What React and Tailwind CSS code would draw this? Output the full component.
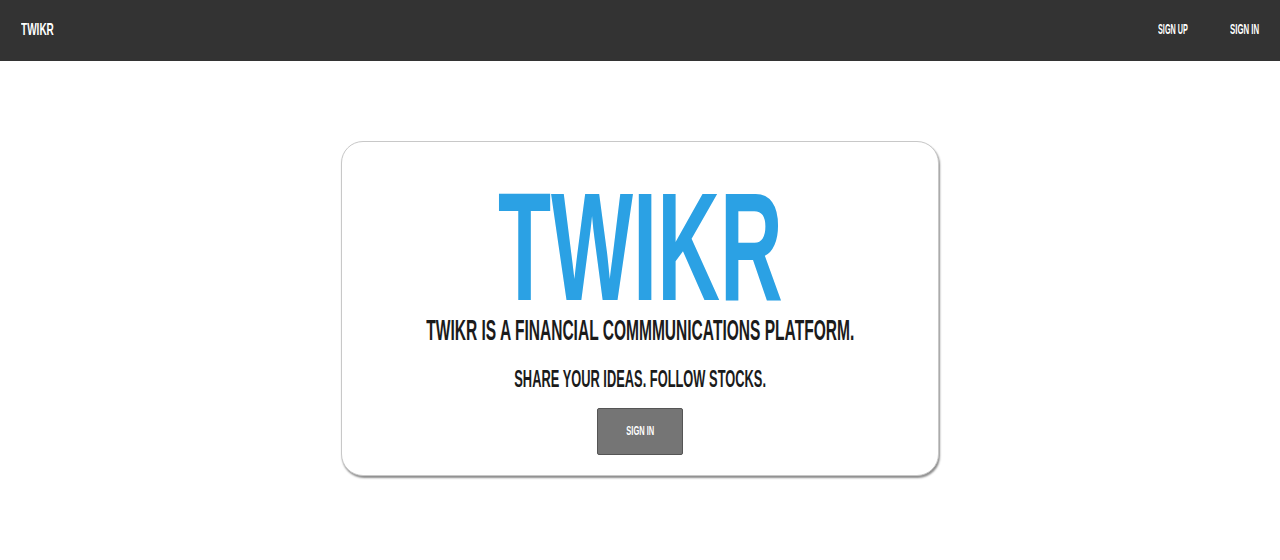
const font = { fontFamily: '"Liberation Sans", Arial, sans-serif' };

const App = () => {
  return (
    <div className="min-h-[560px] bg-white" style={font}>
      {/* Top bar */}
      <nav className="h-[61px] bg-[#333333] flex items-center justify-between px-[21px]">
        <div className="w-[33px] h-[20px] flex items-center -mt-[3px]">
          <span className="inline-block origin-left scale-x-[0.59] whitespace-nowrap text-[17px] leading-none font-bold text-white">
            TWIKR
          </span>
        </div>
        <div className="flex items-center gap-[42px] -mt-[3px]">
          <div className="w-[30px] flex items-center">
            <span className="inline-block origin-left scale-x-[0.52] whitespace-nowrap text-[14px] leading-none font-bold text-white">
              SIGN UP
            </span>
          </div>
          <div className="w-[29px] flex items-center">
            <span className="inline-block origin-left scale-x-[0.56] whitespace-nowrap text-[14px] leading-none font-bold text-white">
              SIGN IN
            </span>
          </div>
        </div>
      </nav>

      {/* Landing card */}
      <div className="pt-[80px]">
        <div className="mx-auto w-[598px] rounded-[22px] border border-[#c8c8c8] bg-white shadow-[1px_2px_2px_rgba(0,0,0,0.45)] pt-[45px] pb-[20px] flex flex-col items-center">
          <div className="h-[120px] leading-[120px] text-center">
            <span className="inline-block scale-x-[0.564] whitespace-nowrap text-[154px] leading-[120px] font-bold text-[#2ba1e4]">
              TWIKR
            </span>
          </div>
          <div className="mt-[9px] h-[29px] leading-[29px] text-center">
            <span className="inline-block scale-x-[0.536] whitespace-nowrap text-[29px] font-bold text-[#1b1b1b]">
              TWIKR IS A FINANCIAL COMMMUNICATIONS PLATFORM.
            </span>
          </div>
          <div className="mt-[23px] h-[23px] leading-[23px] text-center">
            <span className="inline-block scale-x-[0.559] whitespace-nowrap text-[23px] font-bold text-[#1b1b1b]">
              SHARE YOUR IDEAS. FOLLOW STOCKS.
            </span>
          </div>
          <button className="mt-[17px] w-[86px] h-[47px] rounded-[2px] border border-[#555555] bg-[#757575] flex items-center justify-center">
            <span className="inline-block scale-x-[0.6] whitespace-nowrap text-[12.5px] leading-none font-bold text-white">
              SIGN IN
            </span>
          </button>
        </div>
      </div>
    </div>
  );
};

export default App;
